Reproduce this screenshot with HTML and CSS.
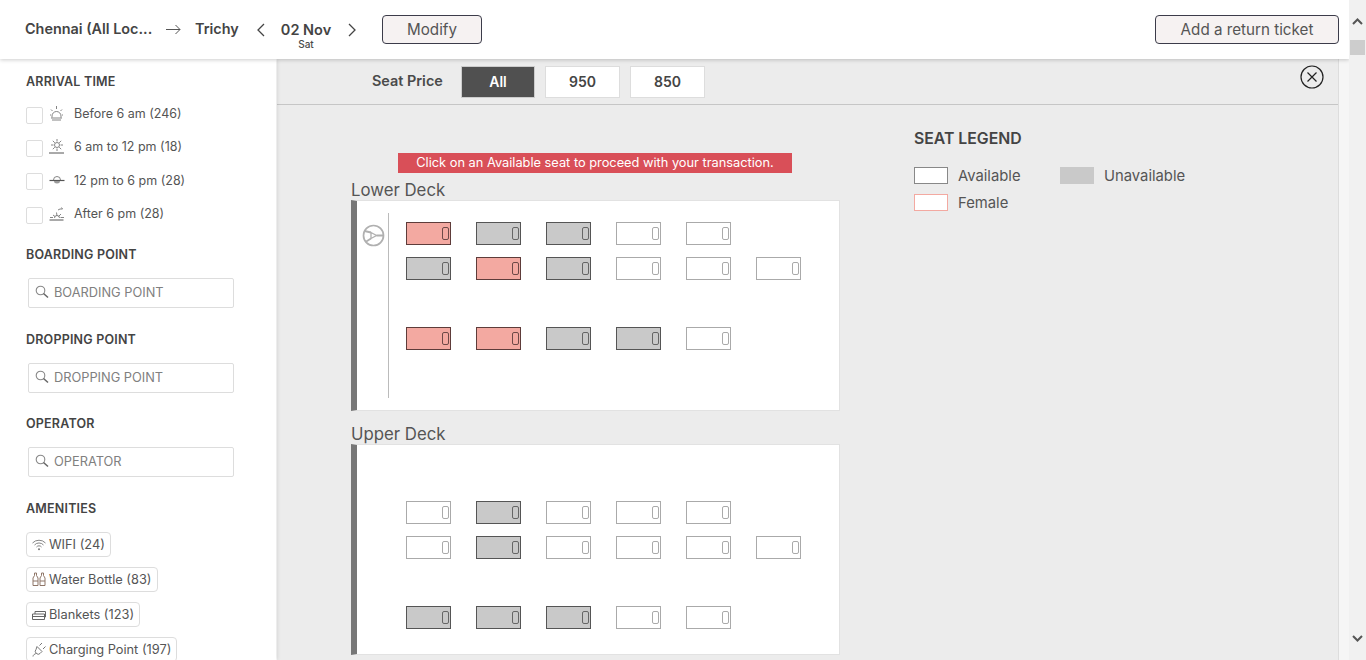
FILE: index.html
```html
<!DOCTYPE html>
<html lang="en">
<head>
    <meta charset="UTF-8">
    <meta name="viewport" content="width=device-width, initial-scale=1.0">
    <title>Select Seats</title>
    <link rel="stylesheet" href="styles.css">
</head>
<body>
<div id="page">
    <div id="main">
        <header id="topbar">
            <span class="city city-from">Chennai (All Loc...</span>
            <svg class="route-arrow" width="15" height="11" viewBox="0 0 15 11"><path d="M0 5.500h14M9.500 1l4.500 4.500L9.500 10" fill="none" stroke="#555" stroke-width="1"/></svg>
            <span class="city city-to">Trichy</span>
            <svg class="date-prev" width="9" height="14" viewBox="0 0 9 14"><path d="M8 1L2 7l6 6" fill="none" stroke="#444" stroke-width="1.300"/></svg>
            <div class="date">
                <strong>02 Nov</strong>
                <span>Sat</span>
            </div>
            <svg class="date-next" width="9" height="14" viewBox="0 0 9 14"><path d="M1 1l6 6-6 6" fill="none" stroke="#444" stroke-width="1.300"/></svg>
            <button class="top-btn btn-modify">Modify</button>
            <button class="top-btn btn-return">Add a return ticket</button>
        </header>

        <div id="content">
            <aside id="sidebar">
                <h3 class="filter-title first">ARRIVAL TIME</h3>
                <label class="time-row">
                    <span class="check"></span>
                    <svg class="time-icon" width="16" height="16" viewBox="0 0 16 16"><path d="M3 11.500V10a4.500 4.500 0 0 1 9 0v1.500M2 12h11M3 14h9M7.500 0v3M2 3.500l1.500 1.500M13 3.500L11.500 5M1 9h1M13 9h1" fill="none" stroke="#777" stroke-width="0.900"/></svg>
                    <span>Before 6 am (246)</span>
                </label>
                <label class="time-row">
                    <span class="check"></span>
                    <svg class="time-icon" width="16" height="16" viewBox="0 0 16 16"><circle cx="8" cy="6" r="2.500" fill="none" stroke="#777" stroke-width="0.900"/><path d="M8 0v2.500M8 9.500V12M2 6h2.500M11.500 6H14M3.800 1.800l2 2M12.200 1.800l-2 2M3.800 10.200l2-2M12.200 10.200l-2-2" fill="none" stroke="#777" stroke-width="0.900"/><path d="M0 14h15" stroke="#555" stroke-width="1"/></svg>
                    <span>6 am to 12 pm (18)</span>
                </label>
                <label class="time-row">
                    <span class="check"></span>
                    <svg class="time-icon" width="16" height="16" viewBox="0 0 16 16"><path d="M0.500 8.500h15" stroke="#555" stroke-width="1.200"/><path d="M4.500 8a3.300 3.300 0 0 1 7 0" fill="none" stroke="#777" stroke-width="0.900"/><path d="M5 9h6a3 2.500 0 0 1-6 0z" fill="#999"/></svg>
                    <span>12 pm to 6 pm (28)</span>
                </label>
                <label class="time-row">
                    <span class="check"></span>
                    <svg class="time-icon" width="16" height="16" viewBox="0 0 16 16"><path d="M0.500 14h14" stroke="#555" stroke-width="1"/><path d="M1 11.500h3M11.500 11.500H15M4 9l2 1.500M7.500 6.500L8 10M12 8l-2.500 2.500M5.500 12a2.500 2.500 0 0 1 5 0M9 4l2-1M11 3h2.500l-1-1.500" fill="none" stroke="#777" stroke-width="0.900"/></svg>
                    <span>After 6 pm (28)</span>
                </label>

                <h3 class="filter-title">BOARDING POINT</h3>
                <div class="search-box">
                    <svg width="14" height="14" viewBox="0 0 14 14"><circle cx="5.500" cy="5.500" r="4.300" fill="none" stroke="#888" stroke-width="1.100"/><path d="M8.500 8.500l4.500 4" stroke="#666" stroke-width="1.500"/></svg>
                    <span>BOARDING POINT</span>
                </div>

                <h3 class="filter-title">DROPPING POINT</h3>
                <div class="search-box">
                    <svg width="14" height="14" viewBox="0 0 14 14"><circle cx="5.500" cy="5.500" r="4.300" fill="none" stroke="#888" stroke-width="1.100"/><path d="M8.500 8.500l4.500 4" stroke="#666" stroke-width="1.500"/></svg>
                    <span>DROPPING POINT</span>
                </div>

                <h3 class="filter-title title-operator">OPERATOR</h3>
                <div class="search-box">
                    <svg width="14" height="14" viewBox="0 0 14 14"><circle cx="5.500" cy="5.500" r="4.300" fill="none" stroke="#888" stroke-width="1.100"/><path d="M8.500 8.500l4.500 4" stroke="#666" stroke-width="1.500"/></svg>
                    <span>OPERATOR</span>
                </div>

                <h3 class="filter-title">AMENITIES</h3>
                <div class="chip">
                    <svg width="14" height="12" viewBox="0 0 14 12"><path d="M0.500 4a9 9 0 0 1 13 0M2.500 6a6 6 0 0 1 9 0M4.500 8a3.200 3.200 0 0 1 5 0" fill="none" stroke="#777" stroke-width="0.900"/><circle cx="7" cy="10.300" r="1" fill="#777"/></svg>
                    <span>WIFI (24)</span>
                </div>
                <div class="chip">
                    <svg width="14" height="15" viewBox="0 0 14 15"><path d="M2.500 1h2v2.500L6 6v7.500H1V6l1.500-2.500zM9.500 1h2v2.500L13 6v7.500H8V6l1.500-2.500zM1 9h5M8 9h5" fill="none" stroke="#8f7668" stroke-width="1"/></svg>
                    <span>Water Bottle (83)</span>
                </div>
                <div class="chip">
                    <svg width="14" height="12" viewBox="0 0 14 12"><path d="M0.500 5h12v5.500H.500zM.500 7.500h12M3 5V2.500h10.500V8h-1" fill="none" stroke="#666" stroke-width="1"/></svg>
                    <span>Blankets (123)</span>
                </div>
                <div class="chip">
                    <svg width="14" height="15" viewBox="0 0 14 15"><path d="M5 4.500l5 5-2 2a2.500 2.500 0 0 1-3.500 0l-.5-.5a2.500 2.500 0 0 1 0-3.500zM7.500 3.500L10 1M11 7l2.500-2.500M4.500 11.500C3 11.500 1 13 1 14.500" fill="none" stroke="#777" stroke-width="1"/></svg>
                    <span>Charging Point (197)</span>
                </div>
            </aside>

            <section id="seat-panel">
                <div id="price-bar">
                    <span class="price-label">Seat Price</span>
                    <button class="price-btn active">All</button>
                    <button class="price-btn">950</button>
                    <button class="price-btn">850</button>
                    <svg class="close-icon" width="24" height="24" viewBox="0 0 24 24"><circle cx="12" cy="12" r="11" fill="none" stroke="#222" stroke-width="1.200"/><path d="M7.500 7.500l9 9M16.500 7.500l-9 9" stroke="#222" stroke-width="1.200"/></svg>
                </div>

                <div id="seat-body">
                    <div id="decks">
                        <p class="notice">Click on an Available seat to proceed with your transaction.</p>

                        <h4 class="deck-title">Lower Deck</h4>
                        <div class="deck">
                            <div class="driver">
                                <svg width="23" height="23" viewBox="0 0 23 23"><circle cx="11.500" cy="11.500" r="10" fill="none" stroke="#b0b0b0" stroke-width="1.700"/><path d="M9 8.500l5.500 3-5.500 3z" fill="none" stroke="#b0b0b0" stroke-width="1.300"/><path d="M2.500 7L9 8.500M3.500 18L9 14.500M14.500 11.500h7" stroke="#b0b0b0" stroke-width="1.800"/></svg>
                            </div>
                            <div class="seat-grid">
                                <div class="seat female"><i></i></div>
                                <div class="seat booked"><i></i></div>
                                <div class="seat booked"><i></i></div>
                                <div class="seat"><i></i></div>
                                <div class="seat"><i></i></div>
                                <div></div>

                                <div class="seat booked"><i></i></div>
                                <div class="seat female"><i></i></div>
                                <div class="seat booked"><i></i></div>
                                <div class="seat"><i></i></div>
                                <div class="seat"><i></i></div>
                                <div class="seat"><i></i></div>

                                <div></div><div></div><div></div><div></div><div></div><div></div>

                                <div class="seat female"><i></i></div>
                                <div class="seat female"><i></i></div>
                                <div class="seat booked"><i></i></div>
                                <div class="seat booked"><i></i></div>
                                <div class="seat"><i></i></div>
                            </div>
                        </div>

                        <h4 class="deck-title">Upper Deck</h4>
                        <div class="deck upper">
                            <div class="seat-grid">
                                <div class="seat"><i></i></div>
                                <div class="seat booked"><i></i></div>
                                <div class="seat"><i></i></div>
                                <div class="seat"><i></i></div>
                                <div class="seat"><i></i></div>
                                <div></div>

                                <div class="seat"><i></i></div>
                                <div class="seat booked"><i></i></div>
                                <div class="seat"><i></i></div>
                                <div class="seat"><i></i></div>
                                <div class="seat"><i></i></div>
                                <div class="seat"><i></i></div>

                                <div></div><div></div><div></div><div></div><div></div><div></div>

                                <div class="seat booked"><i></i></div>
                                <div class="seat booked"><i></i></div>
                                <div class="seat booked"><i></i></div>
                                <div class="seat"><i></i></div>
                                <div class="seat"><i></i></div>
                            </div>
                        </div>
                    </div>

                    <div id="legend">
                        <h3>SEAT LEGEND</h3>
                        <div class="legend-grid">
                            <div class="legend-item"><span class="swatch"></span>Available</div>
                            <div class="legend-item"><span class="swatch swatch-off"></span>Unavailable</div>
                            <div class="legend-item"><span class="swatch swatch-female"></span>Female</div>
                        </div>
                    </div>
                </div>
            </section>
            <div id="gutter"></div>
        </div>
    </div>

    <div id="scrollbar">
        <svg class="scroll-up" width="11" height="7" viewBox="0 0 11 7"><path d="M1 6l4.500-4.500L10 6" fill="none" stroke="#555" stroke-width="2"/></svg>
        <div class="scroll-thumb"></div>
        <svg class="scroll-down" width="11" height="7" viewBox="0 0 11 7"><path d="M1 1l4.500 4.500L10 1" fill="none" stroke="#555" stroke-width="2"/></svg>
    </div>
</div>
</body>
</html>
```

FILE: styles.css
```css
body {
    font-family: Inter, 'Open Sans', sans-serif;
    margin: 0;
    padding: 0;
    color: #4a4a4a;
    overflow: hidden;
}

#page {
    display: flex;
    width: 1366px;
    height: 660px;
    overflow: hidden;
}

#main {
    width: 1349px;
    display: flex;
    flex-direction: column;
}

#topbar {
    height: 59px;
    flex-shrink: 0;
    display: flex;
    align-items: center;
    background-color: #fff;
    box-shadow: 0 1px 4px rgba(0, 0, 0, 0.2);
    position: relative;
    z-index: 2;
}

.city {
    font-size: 14.400px;
    font-weight: 600;
    color: #444;
    margin-top: -2px;
}

.city-from {
    margin-left: 25px;
    width: 129px;
    white-space: nowrap;
}

.route-arrow {
    margin-left: 12px;
}

.city-to {
    margin-left: 14px;
    width: 44px;
}

.date-prev {
    margin-left: 17px;
}

.date {
    width: 50px;
    margin-left: 16px;
    display: flex;
    flex-direction: column;
    align-items: center;
    padding-top: 12px;
    white-space: nowrap;
}

.date strong {
    font-size: 14.500px;
    font-weight: 600;
    line-height: 17px;
    color: #444;
}

.date span {
    font-size: 10px;
    font-weight: 500;
    line-height: 12px;
}

.date-next {
    margin-left: 17px;
}

.top-btn {
    height: 29px;
    background-color: #f6f2f2;
    border: 1px solid #3c3c4a;
    border-radius: 4px;
    font-family: inherit;
    font-size: 15.200px;
    color: #555;
    padding: 0;
}

.btn-modify {
    width: 100px;
    margin-left: 25px;
}

.btn-return {
    width: 184px;
    margin-left: auto;
    margin-right: 10px;
}

#content {
    flex: 1;
    display: flex;
    min-height: 0;
}

#sidebar {
    width: 276px;
    flex-shrink: 0;
    box-sizing: border-box;
    padding-left: 26px;
    background-color: #fff;
    box-shadow: 1px 0 4px rgba(0, 0, 0, 0.12);
    position: relative;
    z-index: 1;
    overflow: hidden;
}

.filter-title {
    margin: 0;
    padding-top: 17px;
    font-size: 12.500px;
    font-weight: 600;
    letter-spacing: 0.200px;
    line-height: 16px;
    color: #444;
}

.filter-title.first {
    padding-top: 15px;
    margin-bottom: 7px;
}

.time-row {
    display: flex;
    align-items: center;
    height: 33.300px;
    font-size: 12.500px;
    color: #555;
}

.check {
    width: 15px;
    height: 15px;
    border: 1px solid #ddd;
    border-radius: 2px;
    margin-top: 3px;
}

.time-icon {
    margin-left: 6px;
    margin-right: 9px;
}

.search-box {
    width: 206px;
    height: 30px;
    box-sizing: border-box;
    margin: 15px 0 0 2px;
    padding: 0 0 2px 6px;
    display: flex;
    align-items: center;
    gap: 5px;
    border: 1px solid #ddd;
    border-radius: 2px;
    font-size: 12.800px;
    color: #808080;
}

.search-box + .filter-title {
    padding-top: 24px;
}

.search-box + .filter-title.title-operator {
    padding-top: 23px;
}

.chip {
    width: fit-content;
    height: 25px;
    box-sizing: border-box;
    margin-top: 10px;
    padding: 0 5px;
    display: flex;
    align-items: center;
    gap: 3px;
    border: 1px solid #ddd;
    border-radius: 4px;
    font-size: 12.800px;
    color: #555;
}

.filter-title + .chip {
    margin-top: 15px;
}

#seat-panel {
    flex: 1;
    min-width: 0;
    margin-left: 1px;
    background-color: #ececec;
    display: flex;
    flex-direction: column;
}

#price-bar {
    height: 46px;
    flex-shrink: 0;
    box-sizing: border-box;
    display: flex;
    align-items: flex-start;
    padding: 7px 14px 0 95px;
    border-bottom: 1px solid #c6c6c6;
}

.price-label {
    width: 89px;
    font-size: 14.400px;
    font-weight: 600;
    line-height: 29px;
}

.price-btn {
    width: 75px;
    height: 32px;
    margin-right: 10px;
    background-color: #fff;
    border: 1px solid #ddd;
    font-family: inherit;
    font-size: 14px;
    font-weight: 600;
    color: #444;
    padding: 0 0 2px;
}

.price-btn.active {
    width: 74px;
    background-color: #505050;
    border-color: #ccc;
    color: #fff;
}

.close-icon {
    margin-left: auto;
    margin-top: -1px;
}

#seat-body {
    flex: 1;
    display: flex;
    min-height: 0;
}

#decks {
    width: 489px;
    margin-left: 74px;
    padding-top: 48px;
    flex-shrink: 0;
}

.notice {
    width: 394px;
    height: 20px;
    margin: 0 0 0 47px;
    background-color: #d94f58;
    color: #fff;
    font-size: 12.800px;
    line-height: 20px;
    text-align: center;
}

.deck-title {
    margin: 0;
    height: 27px;
    box-sizing: border-box;
    padding-top: 7px;
    font-size: 16.800px;
    font-weight: 400;
    line-height: 20px;
    color: #555;
}

.deck {
    height: 211px;
    box-sizing: border-box;
    display: flex;
    background-color: #fff;
    border-left: 6px solid #777;
    border-top: 1px solid #e2e2e2;
    border-right: 1px solid #e2e2e2;
    border-bottom: 1px solid #e2e2e2;
    padding-top: 12px;
    margin-bottom: 6px;
}

.driver {
    width: 32px;
    height: 185px;
    box-sizing: border-box;
    border-right: 1px solid #bbb;
    padding: 11px 0 0 5px;
}

.seat-grid {
    display: grid;
    grid-template-columns: repeat(6, 45px);
    grid-auto-rows: 23px;
    column-gap: 25px;
    row-gap: 12px;
    margin: 9px 0 0 17px;
}

.deck.upper .seat-grid {
    margin: 44px 0 0 49px;
}

.seat {
    box-sizing: border-box;
    display: flex;
    align-items: center;
    justify-content: flex-end;
    padding-right: 1px;
    background-color: #fff;
    border: 1px solid #aaa;
}

.seat i {
    width: 7px;
    height: 13px;
    box-sizing: border-box;
    border: 1px solid #aaa;
    border-radius: 2px;
}

.seat.booked {
    background-color: #c9c9c9;
    border-color: #555;
}

.seat.booked i {
    border-color: #666;
}

.seat.female {
    background-color: #f3a9a1;
    border-color: #5e3c3a;
}

.seat.female i {
    border-color: #6e4a48;
}

#legend {
    margin-left: 74px;
    padding-top: 25px;
}

#legend h3 {
    margin: 0;
    font-size: 15.800px;
    font-weight: 600;
    line-height: 18px;
    color: #444;
}

.legend-grid {
    display: grid;
    grid-template-columns: 146px auto;
    grid-auto-rows: 17px;
    row-gap: 10px;
    margin-top: 19px;
}

.legend-item {
    display: flex;
    align-items: center;
    gap: 10px;
    font-size: 14.800px;
    color: #555;
}

.swatch {
    width: 34px;
    height: 17px;
    box-sizing: border-box;
    background-color: #fff;
    border: 1px solid #888;
}

.swatch-off {
    background-color: #c9c9c9;
    border-color: #c9c9c9;
}

.swatch-female {
    border-color: #f3a9a1;
}

#gutter {
    width: 10px;
    flex-shrink: 0;
    background-color: #f6f6f6;
    border-left: 1px solid #ddd;
}

#scrollbar {
    width: 17px;
    flex-shrink: 0;
    display: flex;
    flex-direction: column;
    align-items: center;
    background-color: #f1f1f1;
    position: relative;
    z-index: 3;
}

.scroll-up {
    margin-top: 18px;
}

.scroll-thumb {
    width: 15px;
    height: 15px;
    margin-top: 15px;
    background-color: #cdcdcd;
}

.scroll-down {
    margin-top: auto;
    margin-bottom: 18px;
}
```
